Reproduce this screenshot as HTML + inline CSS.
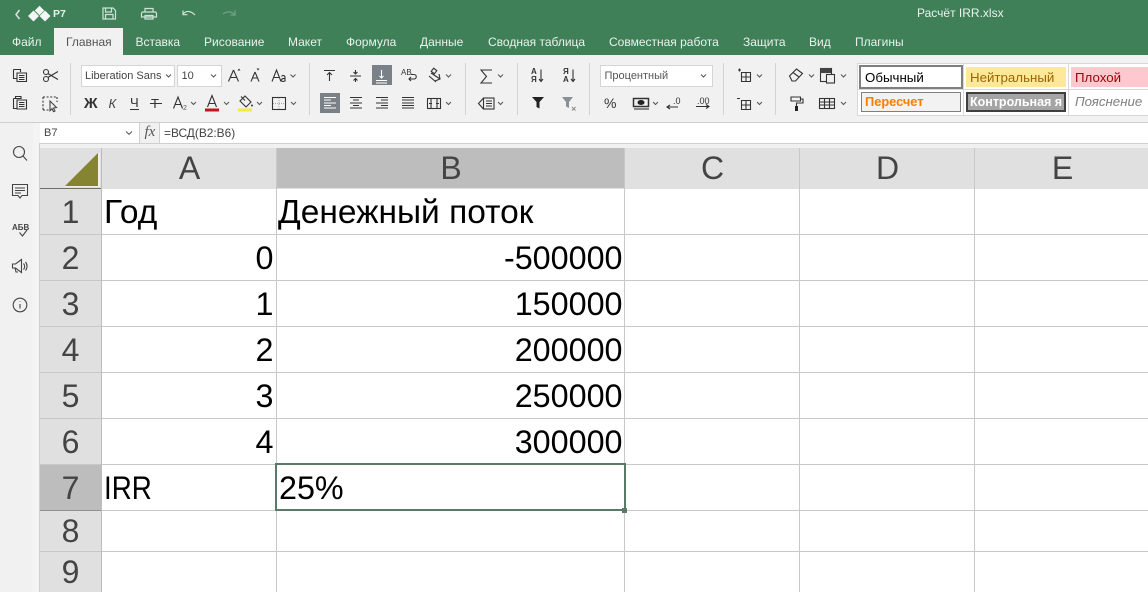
<!DOCTYPE html>
<html><head><meta charset="utf-8"><style>
html,body{margin:0;padding:0;width:1148px;height:592px;overflow:hidden;background:#fff}
body{position:relative;font-family:"Liberation Sans",sans-serif}
.a{position:absolute}
.t{position:absolute;white-space:nowrap;line-height:1}
.tab{position:absolute;white-space:nowrap;top:34.5px;font-size:12px;line-height:14px;color:#e8f3ec}
.h{position:absolute;text-align:center;color:#444;font-size:32px;line-height:40px;top:148px;height:40px;background:#e0e0e0}
.r{position:absolute;left:40px;width:61px;text-align:center;color:#444;font-size:32px;background:#e0e0e0}
.c{position:absolute;font-size:32.3px;line-height:46px;color:#000;white-space:nowrap}
.cy{font-size:33.5px}
.hl{position:absolute;left:102px;width:1046px;height:1px;background:#c8c8c8}
.vl{position:absolute;top:189px;width:1px;height:403px;background:#c8c8c8}
svg{position:absolute;overflow:visible}
.ic{fill:none;stroke:#333;stroke-width:1.1}
.sep{position:absolute;width:1px;background:#d2d2d2;top:63px;height:52px}
.chev{fill:none;stroke:#555;stroke-width:1}
</style></head><body>
<div class="a" style="left:0;top:0;width:1148px;height:55px;background:#3f8059"></div>
<div class="a" style="left:54px;top:28px;width:69px;height:27px;background:#f1f1f1"></div>
<svg style="left:0;top:0" width="300" height="28">
<path d="M19.500 10l-3.500 4.500 3.500 4.500" fill="none" stroke="#d5e8dc" stroke-width="1.500"/>
<path d="M33.500 10.500l5.500 5.500-5.500 5.500-5.500-5.500zM39.500 5.800l4.700 4.700-4.700 4.700-4.700-4.700zM45 10.500l5.500 5.500-5.500 5.500-5.500-5.500z" fill="#f2f7f4"/>
<g fill="none" stroke="#cfe3d7" stroke-width="1.200">
<path d="M103 8h10l2.500 2.500V19h-12.500zM105.500 8v4h6V8M105.500 19v-4.500h7.500V19"/>
<path d="M143 12h12a1.500 1.500 0 0 1 1.500 1.500V17h-15v-3.500A1.500 1.500 0 0 1 143 12zM145 12V8.500h8V12M145 15.500h8V19h-8z"/>
<path d="M183 14c4-4 8-3 12 1M183 10.500v4.200h4.500"/>
</g>
<path d="M235 15c-3.500-4-8-4-12-1M235 10.500v4.500h-4.500" fill="none" stroke="#6ea285" stroke-width="1.300"/>
</svg>
<div class="t" style="left:53px;top:9px;font-size:10.500px;font-weight:bold;color:#e8f3ec">Р7</div>
<div class="t" style="left:917px;top:7px;font-size:12px;color:#e8f3ec">Расчёт IRR.xlsx</div>
<div class="tab" style="left:12px">Файл</div>
<div class="tab" style="left:66px;color:#555">Главная</div>
<div class="tab" style="left:135.500px">Вставка</div>
<div class="tab" style="left:204px">Рисование</div>
<div class="tab" style="left:288px">Макет</div>
<div class="tab" style="left:346px">Формула</div>
<div class="tab" style="left:420px">Данные</div>
<div class="tab" style="left:488px">Сводная таблица</div>
<div class="tab" style="left:609px">Совместная работа</div>
<div class="tab" style="left:743px">Защита</div>
<div class="tab" style="left:809px">Вид</div>
<div class="tab" style="left:855px">Плагины</div>

<div class="a" style="left:0;top:55px;width:1148px;height:67px;background:#f1f1f1"></div>
<div class="a" style="left:0;top:122px;width:1148px;height:1px;background:#cfcfcf"></div>
<div class="sep" style="left:70px"></div><div class="sep" style="left:309px"></div><div class="sep" style="left:465px"></div><div class="sep" style="left:517px"></div><div class="sep" style="left:589px"></div><div class="sep" style="left:723px"></div><div class="sep" style="left:775px"></div>

<svg style="left:0;top:0" width="860" height="125">
<g class="ic">
<path d="M13.500 69.500h7v2.500M13.500 69.500v9h3M17 73h9.500v8.500H17zM19 75.500h5.500M19 77.500h5.500M19 79.500h5.500"/>
<path d="M47 73l11 6.500M47 78l11-6.500"/><circle cx="46" cy="72" r="2.500" fill="#f1f1f1"/><circle cx="46" cy="79" r="2.500" fill="#f1f1f1"/>
<path d="M13.500 98.500h3M13.500 98.500v10h3M15.500 96.500h5.500v2h-5.500zM17 100h9.500v9H17zM19 102.500h5.500M19 104.500h5.500M19 106.500h5.500"/>
<path d="M43 97h14M43 97v13M43 110h6M57 97v5" stroke-dasharray="2 1.600"/><path d="M50 101l6.500 6.500-3 .5 1.500 3-1.500.7-1.500-3-2 2z" stroke="#444"/>
</g>
<path d="M233.500 70l-5 11.500M233.500 70l5 11.500M230.500 77.500h6" class="ic" stroke="#444"/><path d="M237.500 70.500l1.500-2 1.500 2z" fill="#333"/>
<path d="M255 72l-4 9.500M255 72l4 9.500M252.500 78h5" class="ic"/><path d="M256.500 68.500h3l-1.500 2z" fill="#333"/>
<path d="M272 81.500l4.500-11.500 4.500 11.500M273.500 77.500h6" class="ic"/><path d="M281.500 76.500c1-1.500 3.500-1.500 3.500 1v4M285 78.500c-4-.5-4.500 3-2 3 1 0 2-.5 2-1.500" class="ic" stroke-width=".9"/>
<g class="chev"><path d="M290.500 74.500l2.500 2.500 2.500-2.500M191 102l2.500 2.500 2.500-2.500M224 102l2.500 2.500 2.500-2.500M257 102l2.500 2.500 2.500-2.500M291 102l2.500 2.500 2.500-2.500M446 74.500l2.500 2.500 2.500-2.500M446 102l2.500 2.500 2.500-2.500M498 74.500l2.500 2.500 2.500-2.500M498 102l2.500 2.500 2.500-2.500M653 102l2.500 2.500 2.500-2.500M757 74.500l2.500 2.500 2.500-2.500M757 102l2.500 2.500 2.500-2.500M809 74.500l2.500 2.500 2.500-2.500M841 74.500l2.500 2.500 2.500-2.500M841 102l2.500 2.500 2.500-2.500"/></g>
<path d="M173.500 108.500l4.500-11.500 4.500 11.500M175.500 104.500h5.500" class="ic" stroke="#555"/>
<rect x="205" y="108.500" width="14" height="3" fill="#c4151c"/><path d="M207.500 107l4.500-11.500 4.500 11.500M209 103.500h6" class="ic"/>
<rect x="238" y="108.500" width="14" height="3" fill="#f3ec3a"/><path d="M245 96l6 6-5 5-6-6zM241 96.500l4 4" class="ic"/><circle cx="252" cy="105.500" r="1" fill="#333"/>
<rect x="272.500" y="97.500" width="13" height="12" class="ic" stroke="#444"/><path d="M279 98v11M273 103.500h12" stroke="#aaa" stroke-dasharray="1 1" fill="none"/>

<rect x="372" y="65" width="20" height="20" fill="#798087"/><rect x="320" y="93" width="20" height="20" fill="#798087"/>
<g class="ic" stroke="#222">
<path d="M324 70.500h11M329.500 73v8M327 75l2.500-2.500 2.500 2.500"/>
<path d="M350 76h11M355.500 70v4M355.500 78v4M353.500 72l2 2 2-2M353.500 80.500l2-2 2 2"/>
<path d="M376 80.500h11M376 83h11M381.500 70v8M379.500 76l2 2 2-2" stroke="#fff"/>
<path d="M324 97.500h12M324 100h7M324 103h12M324 105.500h7M324 108h12" stroke="#fff"/>
<path d="M350 97.500h12M353 100h6M350 103h12M353 105.500h6M350 108h12"/>
<path d="M376 97.500h12M381 100h7M376 103h12M381 105.500h7M376 108h12"/>
<path d="M402 97.500h12M402 100h12M402 103h12M402 105.500h12M402 108h12"/>
<rect x="427.500" y="98.500" width="13" height="10"/><path d="M431 98.500v10M437 98.500v10M429 103.500h3M436 103.500h3"/>
<path d="M411 74.500h3a2 2 0 0 1 0 4.500h-5M411 77l-2 2 2 2" />
<path d="M429 76l7 6M431 73l9 6M435 81l5-2-1-5" /><rect x="432" y="69" width="4" height="4" transform="rotate(40 434 71)"/>
<path d="M492 70h-11l5.500 6.500-5.500 6.500H492"/>
<rect x="483.500" y="98" width="10.500" height="11"/><path d="M483.500 98l-5 5.500 5 5.500M486 101h6M486 103.500h6M486 106h6" />
<path d="M541 69.500v12M539 79l2 2.500 2-2.500M573 69.500v12M571 79l2 2.500 2-2.500"/>
</g>
<path d="M532 97h12l-4.500 5v6.500l-3-1.500v-5z" fill="#222"/>
<path d="M562 97h11l-4 5v6l-3-1.500V102z" fill="#8a9096"/><path d="M572 107l3.500 3.500M575.500 107l-3.500 3.500" stroke="#888" fill="none"/>
<g class="ic" stroke="#222">
<rect x="633.500" y="98.500" width="15" height="8" fill="#f1f1f1" stroke-width="1.500"/><ellipse cx="641" cy="102.500" rx="3.500" ry="2.500" fill="#222" stroke="none"/><path d="M634 109h15"/>
<path d="M667 107h11M670 105l-3 2 3 2"/>
<path d="M696 106.500h13M706 104.500l3 2-3 2"/>
<path d="M738 70h3M739.500 68.500v3M741.500 72.500h9v9h-9zM741.500 77h9M746 72.500v9"/>
<path d="M737 98.500h3M741.500 100.500h9v9h-9zM741.500 105h9M746 100.500v9"/>
<path d="M789.500 76l7-7 6 4.500-7 7.500h-3.500z"/><path d="M793 72.500l6 4.500"/>
<rect x="820.500" y="68.500" width="11" height="13"/><rect x="826.500" y="74.500" width="8" height="8.500" fill="#f1f1f1"/>
<path d="M820 72.500h11"/>
<path d="M791 97h9.500v4H791zM800.500 99h2.500v4h-6.500v3"/>
<rect x="819.500" y="98.500" width="15" height="10"/><path d="M819 102h15M819 105h15M824.500 98v10M829.500 98v10"/>
</g>
<rect x="795" y="106" width="3" height="5" fill="#222"/>
<rect x="820" y="68" width="11" height="5" fill="#444"/>
</svg>

<div class="a" style="left:81px;top:65px;width:92px;height:20px;background:#fff;border:1px solid #d5d5d5"></div>
<div class="t" style="left:85px;top:70.500px;font-size:11px;color:#444">Liberation Sans</div>
<div class="a" style="left:177px;top:65px;width:43px;height:20px;background:#fff;border:1px solid #d5d5d5"></div>
<div class="t" style="left:181.500px;top:70.500px;font-size:11px;color:#444">10</div>
<div class="a" style="left:600px;top:65px;width:111px;height:20px;background:#fff;border:1px solid #d5d5d5"></div>
<div class="t" style="left:604.500px;top:70.500px;font-size:11px;color:#555">Процентный</div>
<svg style="left:0;top:0" width="720" height="90"><g class="chev"><path d="M166 74.500l2.500 2.500 2.500-2.500M211 74.500l2.500 2.500 2.500-2.500M701 74.500l2.500 2.500 2.500-2.500"/></g></svg>
<div class="t" style="left:84px;top:96px;font-size:15px;font-weight:bold;color:#333">Ж</div>
<div class="t" style="left:108.500px;top:96.500px;font-size:13px;font-style:italic;color:#444">К</div>
<div class="t" style="left:130px;top:96px;font-size:13px;color:#333;border-bottom:1px solid #333">Ч</div>
<div class="t" style="left:151px;top:96.500px;font-size:13px;color:#333">Т</div>
<div class="a" style="left:150px;top:103px;width:12px;height:1px;background:#333"></div>
<div class="t" style="left:183px;top:105px;font-size:7px;color:#555">2</div>
<div class="t" style="left:604px;top:96px;font-size:14px;color:#333">%</div>
<div class="t" style="left:673px;top:97px;font-size:9px;color:#333">.0</div>
<div class="t" style="left:697px;top:97px;font-size:9px;color:#333">.00</div>
<div class="t" style="left:401px;top:69px;font-size:8px;color:#333">АВ</div>
<div class="t" style="left:531px;top:68px;font-size:8px;font-weight:bold;color:#333;line-height:7.500px;white-space:normal;width:6px">А Я</div>
<div class="t" style="left:563px;top:68px;font-size:8px;font-weight:bold;color:#333;line-height:7.500px;white-space:normal;width:6px">Я А</div>

<div class="a" style="left:858px;top:64px;width:290px;height:51px;background:#fff;outline:1px solid #d8d8d8"></div>
<div class="a" style="left:858px;top:89px;width:290px;height:1px;background:#d8d8d8"></div>
<div class="a" style="left:963px;top:64px;width:1px;height:51px;background:#d8d8d8"></div>
<div class="a" style="left:1068px;top:64px;width:1px;height:51px;background:#d8d8d8"></div>
<div class="a" style="left:859px;top:65px;width:100px;height:20px;background:#fff;border:2px solid #7f7f7f"></div>
<div class="t" style="left:865px;top:70.500px;font-size:13.300px;color:#000">Обычный</div>
<div class="a" style="left:966px;top:67px;width:100px;height:20px;background:#ffe998"></div>
<div class="t" style="left:970px;top:70.500px;font-size:13.300px;color:#9c6500">Нейтральный</div>
<div class="a" style="left:1071px;top:67px;width:77px;height:20px;background:#ffc7ce"></div>
<div class="t" style="left:1075px;top:70.500px;font-size:13.300px;color:#9c0006">Плохой</div>
<div class="a" style="left:861px;top:92px;width:98px;height:18px;background:#f2f2f2;border:1px solid #7f7f7f"></div>
<div class="t" style="left:865px;top:95.500px;font-size:12.800px;font-weight:bold;color:#fa7d00">Пересчет</div>
<div class="a" style="left:966px;top:92px;width:96px;height:16px;background:#a5a5a5;border:2px solid #3f3f3f;overflow:hidden"><span class="t" style="left:2px;top:2px;font-size:12.500px;font-weight:bold;color:#fff">Контрольная я</span></div>
<div class="t" style="left:1075px;top:95px;font-size:13.300px;font-style:italic;color:#7f7f7f">Пояснение</div>

<div class="a" style="left:0;top:123px;width:1148px;height:25px;background:#f1f1f1"></div>
<div class="a" style="left:0;top:123px;width:33px;height:469px;background:#f1f1f1"></div>
<div class="a" style="left:33px;top:123px;width:7px;height:469px;background:#f4f4f4"></div>
<div class="a" style="left:40px;top:123px;width:1108px;height:20px;background:#fff;border-bottom:1px solid #cfcfcf"></div>
<div class="a" style="left:139px;top:123px;width:21px;height:20px;background:#f1f1f1;border-left:1px solid #cfcfcf;border-right:1px solid #cfcfcf;box-sizing:border-box"></div>
<div class="a" style="left:39px;top:143px;width:1px;height:449px;background:#cfcfcf"></div>
<div class="t" style="left:44px;top:128px;font-size:11px;color:#444">B7</div>
<svg style="left:0;top:0" width="140" height="140"><path class="chev" d="M126 131.500l3 2.800 3-2.800"/></svg>
<div class="t" style="left:144.500px;top:125px;font-size:15px;font-style:italic;font-family:'Liberation Serif',serif;color:#555">fx</div>
<div class="t" style="left:164px;top:127.500px;font-size:11.900px;color:#444">=ВСД(В2:В6)</div>

<svg style="left:0;top:0" width="40" height="320"><g fill="none" stroke="#444" stroke-width="1.100">
<circle cx="19" cy="152" r="5.500"/><path d="M23 156l4 4.500"/>
<path d="M12.500 184.500h15v11h-5.500l-2 2.500-2-2.500h-5.500zM15 188h10M15 190.500h10M15 193h6"/>
<path d="M19.500 232.500l3 3.500 4.500-6"/>
<path d="M12.500 264h3l6-4.500v13l-6-4.500h-3zM15 268l1 4h2M23.500 263.500c1.500 1.500 1.500 4.500 0 6M25.500 262c2 2.500 2 6 0 8.500"/>
<circle cx="20" cy="305" r="6.800"/></g>
<path d="M20 301.500v.5M20 304v4.500" stroke="#444" stroke-width="1.100" fill="none"/></svg>
<div class="t" style="left:12px;top:223.500px;font-size:8px;font-weight:bold;color:#444">АБВ</div>

<!-- grid -->
<div class="a" style="left:40px;top:148px;width:1108px;height:41px;background:#e0e0e0"></div>
<div class="a" style="left:40px;top:188px;width:61px;height:1px;background:#6f6f6f"></div>
<svg style="left:40px;top:148px" width="62" height="41"><path d="M25 39h35V4z" fill="#f1f1e1" stroke="none"/><path d="M25 38l33-33v33z" fill="#858430"/></svg>
<div class="a" style="left:101px;top:148px;width:1px;height:444px;background:#bdbdbd"></div>
<div class="h" style="left:102px;width:175px">A</div>
<div class="h" style="left:277px;width:348px;background:#bdbdbd">B</div>
<div class="h" style="left:625px;width:175px">C</div>
<div class="h" style="left:800px;width:175px">D</div>
<div class="h" style="left:975px;width:175px">E</div>
<div class="a" style="left:276px;top:148px;width:1px;height:41px;background:#c8c8c8"></div>
<div class="a" style="left:624px;top:148px;width:1px;height:41px;background:#c8c8c8"></div>
<div class="a" style="left:799px;top:148px;width:1px;height:41px;background:#c8c8c8"></div>
<div class="a" style="left:974px;top:148px;width:1px;height:41px;background:#c8c8c8"></div>

<div class="r" style="top:189px;height:45px;line-height:46px">1</div>
<div class="r" style="top:235px;height:45px;line-height:46px">2</div>
<div class="r" style="top:281px;height:45px;line-height:46px">3</div>
<div class="r" style="top:327px;height:45px;line-height:46px">4</div>
<div class="r" style="top:373px;height:45px;line-height:46px">5</div>
<div class="r" style="top:419px;height:45px;line-height:46px">6</div>
<div class="r" style="top:465px;height:45px;line-height:46px;background:#bdbdbd">7</div>
<div class="r" style="top:511px;height:40px;line-height:40px">8</div>
<div class="r" style="top:552px;height:40px;line-height:40px">9</div>
<div class="a" style="left:40px;top:234px;width:61px;height:1px;background:#c8c8c8"></div>
<div class="a" style="left:40px;top:280px;width:61px;height:1px;background:#c8c8c8"></div>
<div class="a" style="left:40px;top:326px;width:61px;height:1px;background:#c8c8c8"></div>
<div class="a" style="left:40px;top:372px;width:61px;height:1px;background:#c8c8c8"></div>
<div class="a" style="left:40px;top:418px;width:61px;height:1px;background:#c8c8c8"></div>
<div class="a" style="left:40px;top:464px;width:61px;height:1px;background:#c8c8c8"></div>
<div class="a" style="left:40px;top:510px;width:61px;height:1px;background:#8f8f8f"></div>
<div class="a" style="left:40px;top:551px;width:61px;height:1px;background:#c8c8c8"></div>

<div class="hl" style="top:234px"></div><div class="hl" style="top:280px"></div><div class="hl" style="top:326px"></div><div class="hl" style="top:372px"></div><div class="hl" style="top:418px"></div><div class="hl" style="top:464px"></div><div class="hl" style="top:510px"></div><div class="hl" style="top:551px"></div>
<div class="vl" style="left:276px"></div><div class="vl" style="left:624px"></div><div class="vl" style="left:799px"></div><div class="vl" style="left:974px"></div>

<div class="c cy" style="left:104px;top:190px">Год</div>
<div class="c cy" style="left:278px;top:190px">Денежный поток</div>
<div class="c" style="right:874.500px;top:235px">0</div>
<div class="c" style="right:874.500px;top:281px">1</div>
<div class="c" style="right:874.500px;top:327px">2</div>
<div class="c" style="right:874.500px;top:373px">3</div>
<div class="c" style="right:874.500px;top:419px">4</div>
<div class="c" style="right:525.500px;top:235px">-500000</div>
<div class="c" style="right:525.500px;top:281px">150000</div>
<div class="c" style="right:525.500px;top:327px">200000</div>
<div class="c" style="right:525.500px;top:373px">250000</div>
<div class="c" style="right:525.500px;top:419px">300000</div>
<div class="c" style="left:104px;top:465px;transform:scaleX(.86);transform-origin:0 50%">IRR</div>
<div class="c" style="left:279px;top:465px">25%</div>
<div class="a" style="left:275px;top:463px;width:347px;height:44px;border:2px solid #5a7a68"></div>
<div class="a" style="left:622px;top:508px;width:5px;height:5px;background:#5a7a68"></div>
</body></html>
